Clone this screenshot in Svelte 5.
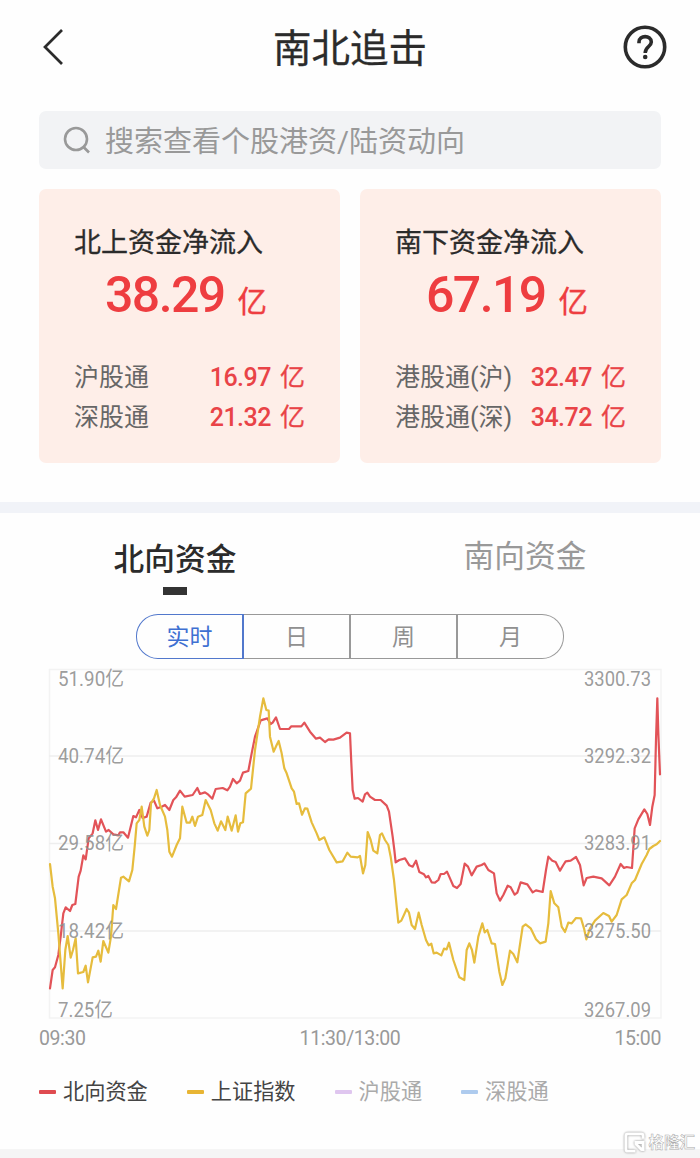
<script lang="ts">
  // Fund summary cards
  const cards = [
    {
      title: "北上资金净流入",
      total: "38.29",
      rows: [
        { label: "沪股通", value: "16.97" },
        { label: "深股通", value: "21.32" },
      ],
    },
    {
      title: "南下资金净流入",
      total: "67.19",
      rows: [
        { label: "港股通(沪)", value: "32.47" },
        { label: "港股通(深)", value: "34.72" },
      ],
    },
  ];

  const periods = ["实时", "日", "周", "月"];
  let activePeriod = $state("实时");

  // Axis labels: text, baseline and drawn width
  const leftAxis = [
    { text: "51.90亿", y: 16.5, w: 66 },
    { text: "40.74亿", y: 94, w: 66 },
    { text: "29.58亿", y: 181, w: 66 },
    { text: "18.42亿", y: 268.5, w: 66 },
    { text: "7.25亿", y: 348, w: 55 },
  ];
  const rightAxis = [
    { text: "3300.73", y: 16.5 },
    { text: "3292.32", y: 94 },
    { text: "3283.91", y: 181 },
    { text: "3275.50", y: 268.5 },
    { text: "3267.09", y: 348 },
  ];
  const gridLines = [87, 174.5, 262];

  // Series points, in thirds of a pixel
  const north =
    "30,985 38,930 45,922 55,885 62,830 70,760 77,742 90,753 97,735 106,732 116,650 122,632 130,586 137,598 146,535 158,520 166,481 174,510 183,478 198,515 206,510 220,523 235,526 240,517 250,517 264,533 280,468 288,472 298,450 308,474 320,470 332,428 342,422 352,445 365,440 375,435 388,450 400,420 408,412 420,392 434,410 " +
    "458,405 472,384 480,402 495,397 505,404 517,416 527,387 548,384 562,391 570,380 579,357 590,370 600,362 609,338 625,333 635,280 645,230 662,181 682,175 692,192 698,188 708,172 720,207 747,207 754,199 784,199 793,188 810,215 828,236 840,233 855,246 866,238 880,239 900,233 920,218 930,220 " +
    "934,310 938,390 944,416 954,414 968,425 975,403 982,398 990,410 1005,420 1022,420 1040,437 1047,455 1058,530 1063,570 1067,607 1078,600 1095,595 1108,616 1118,620 1128,602 1138,636 1152,643 1158,652 1165,648 1175,667 1185,668 1195,660 1202,642 1212,642 1221,635 1230,655 1240,678 1251,684 1262,672 1274,611 1284,620 1295,646 1310,620 1325,615 1333,610 1345,630 1362,640 1370,700 1380,722 " +
    "1390,705 1403,677 1412,682 1424,704 1432,698 1442,667 1462,673 1478,697 1488,691 1508,696 1518,630 1525,590 1537,602 1547,606 1560,632 1570,615 1577,604 1592,602 1608,591 1620,615 1631,676 1640,654 1660,650 1685,655 1708,676 1725,650 1742,612 1752,624 1760,621 1776,624 1784,505 1795,478 1813,448 1822,462 1830,495 1837,440 1844,405 1848,240 1852,115 1855,220 1860,343";
  const index =
    "30,612 38,680 45,715 55,820 68,985 76,870 83,828 92,893 99,870 107,835 114,940 130,936 137,917 144,967 158,892 168,890 175,872 182,905 190,843 205,878 213,830 220,735 228,747 243,653 250,650 267,664 277,630 284,560 290,490 298,480 305,440 313,500 322,527 328,510 333,430 342,415 350,390 360,435 375,470 382,510 388,575 396,590 410,555 420,535 427,440 440,488 450,488 " +
    "457,470 465,498 474,470 487,465 497,420 512,450 523,490 533,512 543,484 556,510 563,470 575,512 587,466 594,515 601,490 609,487 617,400 633,386 645,270 660,170 670,115 679,150 686,152 690,230 701,275 710,255 716,243 725,280 733,325 740,340 755,385 762,395 770,432 777,430 786,464 795,445 802,446 815,487 830,520 838,540 853,532 868,570 890,607 908,604 " +
    "922,578 932,590 953,592 960,588 969,640 976,615 983,516 992,540 1000,572 1012,580 1020,525 1026,520 1035,540 1045,555 1052,590 1062,660 1075,788 1084,782 1100,747 1107,758 1115,795 1125,807 1136,758 1145,795 1158,840 1166,856 1174,851 1181,880 1190,878 1204,886 1212,866 1220,868 1227,848 1240,900 1258,952 1273,960 1280,870 1288,850 1296,870 1303,908 1315,830 1327,790 1334,817 1342,810 1355,850 1365,852 1378,935 1387,975 " +
    "1396,955 1410,872 1420,882 1432,907 1442,840 1448,800 1457,793 1472,805 1488,838 1500,850 1517,845 1525,790 1532,693 1543,730 1555,742 1565,800 1575,816 1585,788 1595,790 1608,774 1623,775 1632,805 1639,838 1650,805 1665,782 1690,759 1707,768 1715,785 1730,765 1745,718 1760,705 1775,670 1785,660 1805,612 1820,585 1828,567 1840,558 1850,553 1860,543";

  const legend = [
    { name: "北向资金", kind: "north", muted: false },
    { name: "上证指数", kind: "index", muted: false },
    { name: "沪股通", kind: "sh", muted: true },
    { name: "深股通", kind: "sz", muted: true },
  ];
</script>

<div class="page">
  <header class="header">
    <svg class="back" viewBox="0 0 24 40" aria-hidden="true">
      <path d="M21 3 4 20 21 37" />
    </svg>
    <h1>南北追击</h1>
    <svg class="help" viewBox="0 0 44 44" aria-hidden="true">
      <circle cx="22" cy="22" r="19.7" />
      <path d="M16 18.2V17C16 9.8 28.3 9.8 28.3 17C28.3 21.6 22.2 21.6 22.2 28" />
      <circle class="dot" cx="22.2" cy="32" r="2.3" />
    </svg>
  </header>

  <div class="search">
    <svg viewBox="0 0 28 30" aria-hidden="true">
      <circle cx="13" cy="14" r="11" />
      <path d="M20.5 22 26 27.5" />
    </svg>
    <span>搜索查看个股港资/陆资动向</span>
  </div>

  <section class="cards">
    {#each cards as card}
      <div class="card">
        <h2>{card.title}</h2>
        <div class="total"><b>{card.total}</b><span>亿</span></div>
        {#each card.rows as row}
          <div class="row">
            <span class="row-label">{row.label}</span>
            <span class="row-value"><b>{row.value}</b><span>亿</span></span>
          </div>
        {/each}
      </div>
    {/each}
  </section>

  <div class="divider"></div>

  <nav class="tabs">
    <div class="tab active">北向资金</div>
    <div class="tab">南向资金</div>
  </nav>

  <div class="periods">
    {#each periods as period}
      <button class:selected={activePeriod === period} onclick={() => (activePeriod = period)}>{period}</button>
    {/each}
  </div>

  <svg class="chart" viewBox="0 0 614 350">
    <rect class="grid" x="0.5" y="0.5" width="611.5" height="348.5" />
    {#each gridLines as y}
      <line class="grid inner" x1="0" x2="612" y1={y} y2={y} />
    {/each}
    <!-- Series sit under the axis labels -->
    <g class="series" transform="translate(-9 -9) scale(0.33333)">
      <polyline class="north" points={north} />
      <polyline class="index" points={index} />
    </g>
    {#each leftAxis as tick}
      <text x="9" y={tick.y} textLength={tick.w} lengthAdjust="spacingAndGlyphs">{tick.text}</text>
    {/each}
    {#each rightAxis as tick}
      <text x="535" y={tick.y} textLength="67" lengthAdjust="spacingAndGlyphs">{tick.text}</text>
    {/each}
  </svg>

  <div class="times">
    <span>09:30</span>
    <span>11:30/13:00</span>
    <span>15:00</span>
  </div>

  <div class="legend">
    {#each legend as item}
      <div class="legend-item" class:muted={item.muted}>
        <i class={item.kind}></i>
        <span>{item.name}</span>
      </div>
    {/each}
  </div>

  <footer class="footer">
    <div class="brand">
      <svg viewBox="0 0 22 22" aria-hidden="true">
        <path d="M20 7V4Q20 2 18 2H4Q2 2 2 4V18Q2 20 4 20H12M20 20V11H11M12 12 19 19" />
      </svg>
      <span>格隆汇</span>
    </div>
  </footer>
</div>

<style>
  :global(body) {
    background: #fefefe;
  }

  .page {
    width: 700px;
    height: 1158px;
    display: flex;
    flex-direction: column;
    overflow: hidden;
    background: #fefefe;
    color: #2b2b2b;
    font-family: Roboto, "Noto Sans CJK SC", sans-serif;
  }

  svg {
    display: block;
    flex: none;
    fill: none;
  }

  h1,
  h2 {
    margin: 0;
    font-weight: 400;
  }

  /* Header */
  .header {
    height: 94px;
    margin-bottom: 17px;
    padding: 0 33px 0 41px;
    box-sizing: border-box;
    display: flex;
    align-items: center;
    justify-content: space-between;
  }

  .header h1 {
    padding-top: 4px;
    margin-left: 12px;
    font-size: 38.5px;
    line-height: 50px;
    -webkit-text-stroke: 0.3px #2b2b2b;
  }

  .back {
    width: 24px;
    height: 40px;
    stroke: #2b2b2b;
    stroke-width: 2.7;
  }

  .help {
    width: 44px;
    height: 44px;
    stroke: #2b2b2b;
    stroke-width: 3.6;
  }

  .help .dot {
    fill: #2b2b2b;
    stroke: none;
  }

  /* Search */
  .search {
    height: 58px;
    margin: 0 39px 20px;
    padding: 3px 0 0 24px;
    box-sizing: border-box;
    display: flex;
    align-items: center;
    gap: 14px;
    border-radius: 7px;
    background: #f2f3f5;
    color: #999;
    font-size: 29px;
    line-height: 40px;
    white-space: nowrap;
  }

  .search svg {
    width: 28px;
    height: 30px;
    margin-top: -3px;
    stroke: #999;
    stroke-width: 2.6;
  }

  /* Cards */
  .cards {
    display: grid;
    grid-template-columns: 1fr 1fr;
    gap: 20px;
    height: 274px;
    margin: 0 39px;
  }

  .card {
    padding: 36px 35px 0 35px;
    border-radius: 7px;
    background: #feeee8;
  }

  .card h2 {
    font-size: 27px;
    line-height: 36px;
    -webkit-text-stroke: 0.3px #2b2b2b;
  }

  .total {
    height: 70px;
    margin-top: -1px;
    display: flex;
    align-items: baseline;
    padding-left: 31px;
    gap: 13px;
    line-height: 70px;
    color: #ee3d40;
  }

  .total b {
    font-size: 50px;
    font-weight: 500;
    letter-spacing: -1.6px;
  }

  .total span {
    font-size: 29.5px;
    -webkit-text-stroke: 0.4px #ee3d40;
  }

  .row {
    height: 40px;
    display: flex;
    align-items: center;
    justify-content: space-between;
    font-size: 25px;
    line-height: 40px;
    color: #666;
    white-space: nowrap;
  }

  .total + .row {
    margin-top: 28px;
  }

  .row-value {
    display: flex;
    gap: 9px;
    color: #e94347;
  }

  .row-value b {
    font-weight: 500;
    letter-spacing: -0.5px;
  }

  .row-value span {
    -webkit-text-stroke: 0.3px #e94347;
  }

  .divider {
    height: 11px;
    margin-top: 39px;
    background: #f1f3f8;
  }

  /* Tabs */
  .tabs {
    height: 102px;
    display: grid;
    grid-template-columns: 1fr 1fr;
  }

  .tab {
    padding-top: 25px;
    font-size: 30.7px;
    line-height: 38px;
    text-align: center;
    color: #999;
  }

  .tab.active {
    padding-top: 28px;
    color: #2b2b2b;
    font-weight: 500;
  }

  .tab.active::after {
    content: "";
    display: block;
    width: 24px;
    height: 8px;
    margin: 8px auto 0;
    background: #333;
  }

  /* Period switch */
  .periods {
    display: grid;
    grid-template-columns: 108px 107px 107px 106px;
    width: 428px;
    height: 45px;
    margin: -1px 0 10px 136px;
  }

  .periods button {
    padding: 2px 0 0;
    border: 1.5px solid #999;
    border-left: 0;
    border-right-width: 2px;
    background: none;
    color: #909090;
    font: inherit;
    font-size: 23px;
    line-height: 40px;
  }

  .periods button:first-child {
    border-left: 1.5px solid #999;
    border-radius: 22px 0 0 22px;
  }

  .periods button:last-child {
    border-right-width: 1px;
    border-radius: 0 22px 22px 0;
  }

  .periods button.selected {
    border-color: #5278cc;
    color: #3f70d2;
  }

  /* Chart */
  .chart {
    width: 614px;
    height: 350px;
    margin-left: 49px;
    overflow: visible;
  }

  .grid {
    stroke: #f3f3f3;
    stroke-width: 1.5;
  }

  .grid.inner {
    stroke: #eee;
  }

  .series {
    stroke-width: 6.6;
    stroke-linejoin: round;
    stroke-linecap: round;
  }

  .series .north {
    stroke: #e25358;
  }

  .series .index {
    stroke: #e6bc3d;
  }

  .chart text {
    fill: #909090;
    fill-opacity: 0.9;
    font-size: 20.5px;
  }

  .times {
    display: flex;
    justify-content: space-between;
    margin: 7px 39px 0;
    font-size: 19.5px;
    line-height: 26px;
    letter-spacing: -0.4px;
    color: #999;
  }

  /* Legend */
  .legend {
    display: flex;
    gap: 39px;
    margin: 22px 39px 0;
    font-size: 21.2px;
    line-height: 34px;
    white-space: nowrap;
  }

  .legend-item {
    display: flex;
    align-items: center;
    gap: 7px;
    color: #444;
  }

  .legend-item span {
    padding-top: 1px;
  }

  .legend-item.muted {
    color: #aaa;
  }

  .legend i {
    width: 17px;
    height: 4px;
    border-radius: 1px;
  }

  .legend .north {
    background: #df4b50;
  }

  .legend .index {
    background: #e8b534;
  }

  .legend .sh {
    background: #dfc6ef;
  }

  .legend .sz {
    background: #aecbee;
  }

  /* Footer */
  .footer {
    height: 9px;
    margin-top: auto;
    position: relative;
    background: #f5f5f5;
  }

  .brand {
    position: absolute;
    right: 5px;
    bottom: 4px;
    display: flex;
    align-items: center;
    gap: 3px;
    color: #fff;
    font-size: 15.5px;
    line-height: 22px;
    font-weight: 700;
    -webkit-text-stroke: 0.5px #aaa;
    white-space: nowrap;
  }

  .brand span {
    padding-top: 1px;
  }

  .brand svg {
    width: 21px;
    height: 21px;
    stroke: #fff;
    stroke-width: 3;
    filter: drop-shadow(0 0 0.8px #888);
  }
</style>
